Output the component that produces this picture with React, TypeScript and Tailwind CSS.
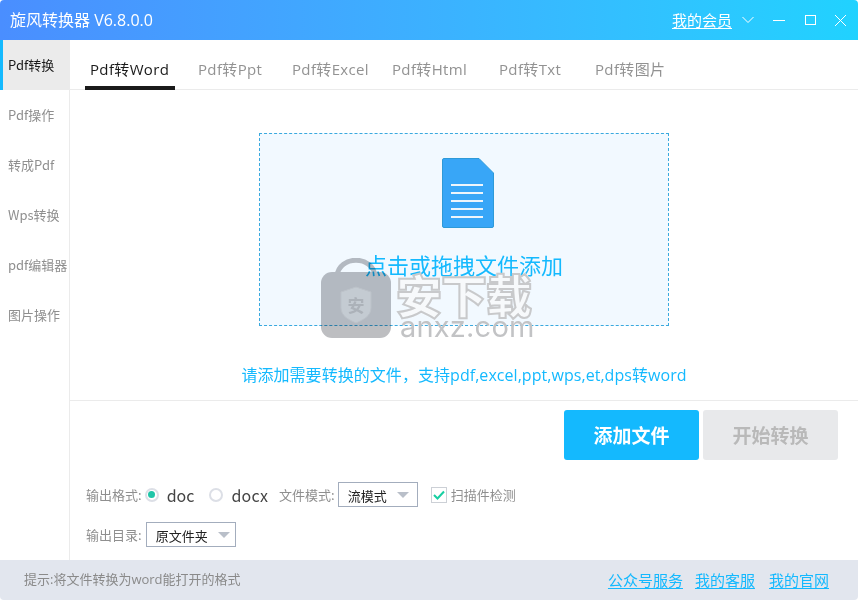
import React from "react";

const tabs = [
  { label: "Pdf转Word", cls: "w-[90px] pl-[5px] text-[#1a1a1a] border-[#1a1a1a]" },
  { label: "Pdf转Ppt", cls: "w-[94px] pl-[23px] text-[#929292] border-transparent" },
  { label: "Pdf转Excel", cls: "w-[100px] pl-[23px] text-[#929292] border-transparent" },
  { label: "Pdf转Html", cls: "w-[107px] pl-[23px] text-[#929292] border-transparent" },
  { label: "Pdf转Txt", cls: "w-[96px] pl-[23px] text-[#929292] border-transparent" },
  { label: "Pdf转图片", cls: "w-[106px] pl-[23px] text-[#929292] border-transparent" },
];
const side = ["Pdf转换", "Pdf操作", "转成Pdf", "Wps转换", "pdf编辑器", "图片操作"];

function Select({ label, w }: { label: string; w: string }) {
  return (
    <div className={`${w} h-[25px] border border-[#a3adbd] flex items-center pl-[9px] gap-[10px] text-[13px] text-[#222] bg-white`}>
      <span className="mt-[2px]">{label}</span>
      <svg width="12" height="6" viewBox="0 0 12 6"><path d="M0 0H12L6 6Z" fill="#b9bfc9" /></svg>
    </div>
  );
}

function Watermark() {
  return (
    <div className="absolute left-[321px] top-[258px] w-[220px] h-[82px] pointer-events-none">
      <svg width="70" height="80" viewBox="0 0 70 80" className="absolute left-0 top-0 mix-blend-multiply">
        <path d="M16 18C18 -3 52 -3 54 18" fill="none" stroke="#bdbec1" strokeWidth="5" />
        <rect x="0" y="14" width="70" height="66" rx="11" fill="#bdbec1" />
        <path d="M20 34L35 29L50 34V50C50 58 42 62 35 65C28 62 20 58 20 50Z" fill="#cfd0d2" stroke="#c6c7c9" />
        <text x="35" y="54" textAnchor="middle" fontSize="17" fontWeight="700" fill="#b5b6b9" fontFamily="'Noto Sans CJK SC', sans-serif">安</text>
      </svg>
      <div className="absolute left-[75px] top-[8px] w-[140px] text-[46px] leading-[54px] font-black tracking-[-1px] text-[#f7f9fb] [-webkit-text-stroke:2px_#c8c9cb] whitespace-nowrap">安下载</div>
      <div className="absolute left-[79px] top-[52px] text-[29px] leading-[34px] tracking-[0.2px] text-[#c2c3c5] font-['Inter',sans-serif] whitespace-nowrap">anxz.com</div>
    </div>
  );
}

export default function App() {
  return (
    <div className="relative w-[858px] h-[600px] overflow-hidden bg-white flex flex-col font-['Noto_Sans_CJK_SC',sans-serif]">
      <header className="h-10 shrink-0 flex items-center bg-gradient-to-r from-[#4a8eff] to-[#20d2ff] text-white rounded-t-[4px]">
        <div className="pl-[10px] text-[16px] font-['Open_Sans','Noto_Sans_CJK_SC',sans-serif]">旋风转换器 V6.8.0.0</div>
        <div className="ml-auto text-[15px] underline underline-offset-2 mr-[10px]">我的会员</div>
        <svg width="12" height="8" viewBox="0 0 12 8" className="mr-[19px]"><path d="M0.5 1L6 6.5L11.5 1" fill="none" stroke="white" /></svg>
        <div className="w-3 h-px bg-white mr-5" />
        <div className="w-[11px] h-[10px] border border-white mr-[19px]" />
        <svg width="11" height="11" viewBox="0 0 11 11" className="mr-3"><path d="M0 0L11 11M11 0L0 11" stroke="white" /></svg>
      </header>
      <div className="flex-1 flex min-h-0">
        <aside className="w-[70px] shrink-0 border-r border-[#ebebeb] flex flex-col text-[13px]">
          {side.map((s, i) => (
            <div key={s} className={`h-[50px] flex items-center whitespace-nowrap ${i === 0 ? "bg-[#ebebeb] border-l-[3px] border-[#14b9fe] pl-[5px] text-[#1a1a1a]" : "pl-2 text-[#8f8f8f]"}`}>{s}</div>
          ))}
        </aside>
        <main className="flex-1 flex flex-col min-w-0">
          <nav className="h-[50px] shrink-0 border-b border-[#ebebeb] pl-[15px] flex items-end text-[15px] tracking-[0.35px] font-['Open_Sans','Noto_Sans_CJK_SC',sans-serif]">
            {tabs.map((t) => (
              <div key={t.label} className={`${t.cls} h-[50px] pt-[18px] border-b-[4px] -mb-px whitespace-nowrap`}>
                <span>{t.label}</span>
              </div>
            ))}
          </nav>
          <section className="h-[311px] shrink-0 border-b border-[#ebebeb] flex flex-col items-center pt-[43px]">
            <div className="w-[410px] h-[193px] shrink-0 border border-dashed border-[#3aa9de] bg-[#f2f9ff] flex flex-col items-center pt-6">
              <svg width="52" height="70" viewBox="0 0 52 70" className="ml-2">
                <path d="M2 0.5H37L51.5 15V68A1.5 1.5 0 0 1 50 69.5H2A1.5 1.5 0 0 1 0.5 68V2A1.5 1.5 0 0 1 2 0.5Z" fill="#38a6f7" stroke="#2e9ad8" />
                <path d="M9 27H41M9 35H41M9 43H41M9 51H41M9 59H41" stroke="#eef5fb" strokeWidth="2" />
              </svg>
              <div className="mt-5 text-[22px] leading-[32px] text-[#14b9fe]">点击或拖拽文件添加</div>
            </div>
            <div className="mt-[37px] text-[16px] leading-6 tracking-[0.05px] text-[#14b9fe] font-['Open_Sans','Noto_Sans_CJK_SC',sans-serif]">请添加需要转换的文件，支持pdf,excel,ppt,wps,et,dps转word</div>
          </section>
          <div className="flex justify-end gap-1 pt-[9px] pr-5">
            <button className="w-[135px] h-[50px] rounded-[3px] bg-[#14b9fe] text-white text-[19px] font-bold">添加文件</button>
            <button className="w-[135px] h-[50px] rounded-[3px] bg-[#e8e9eb] text-[#b9b9b9] text-[19px] font-bold">开始转换</button>
          </div>
          <div className="flex items-center h-[25px] mt-[22px] pl-4 text-[13px] text-[#8f8f8f] whitespace-nowrap">
            <span>输出格式:</span>
            <span className="ml-[3px] w-[14px] h-[14px] rounded-full border-2 border-[#dcdfe6] flex items-center justify-center"><span className="w-[7px] h-[7px] rounded-full bg-[#20c5a8]" /></span>
            <span className="ml-2 text-[16px] text-[#444]">doc</span>
            <span className="ml-[15px] w-[14px] h-[14px] rounded-full border-2 border-[#dcdfe6]" />
            <span className="ml-2 text-[16px] tracking-[0.2px] text-[#444]">docx</span>
            <span className="ml-[11px]">文件模式:</span>
            <span className="ml-[3px]"><Select label="流模式" w="w-[80px]" /></span>
            <span className="ml-[13px] w-4 h-4 border border-[#ccd0d6] flex items-center justify-center">
              <svg width="12" height="10" viewBox="0 0 12 10"><path d="M1 5L4.5 8.5L11 1.5" fill="none" stroke="#17cfa2" strokeWidth="2" /></svg>
            </span>
            <span className="ml-[4px]">扫描件检测</span>
          </div>
          <div className="flex items-center h-[25px] mt-[15px] pl-4 text-[13px] text-[#8f8f8f] whitespace-nowrap">
            <span>输出目录:</span>
            <span className="ml-[4px]"><Select label="原文件夹" w="w-[90px]" /></span>
          </div>
        </main>
      </div>
      <footer className="h-10 shrink-0 bg-[#e2e6ee] flex items-center pl-6 pr-[29px] text-[13px] text-[#8a8a8a] rounded-b-[4px]">
        <span className="font-['Open_Sans','Noto_Sans_CJK_SC',sans-serif]">提示:将文件转换为word能打开的格式</span>
        <div className="ml-auto flex text-[15px] text-[#14b9fe] underline underline-offset-2">
          <span>公众号服务</span><span className="ml-3">我的客服</span><span className="ml-[14px]">我的官网</span>
        </div>
      </footer>
      <Watermark />
    </div>
  );
}
